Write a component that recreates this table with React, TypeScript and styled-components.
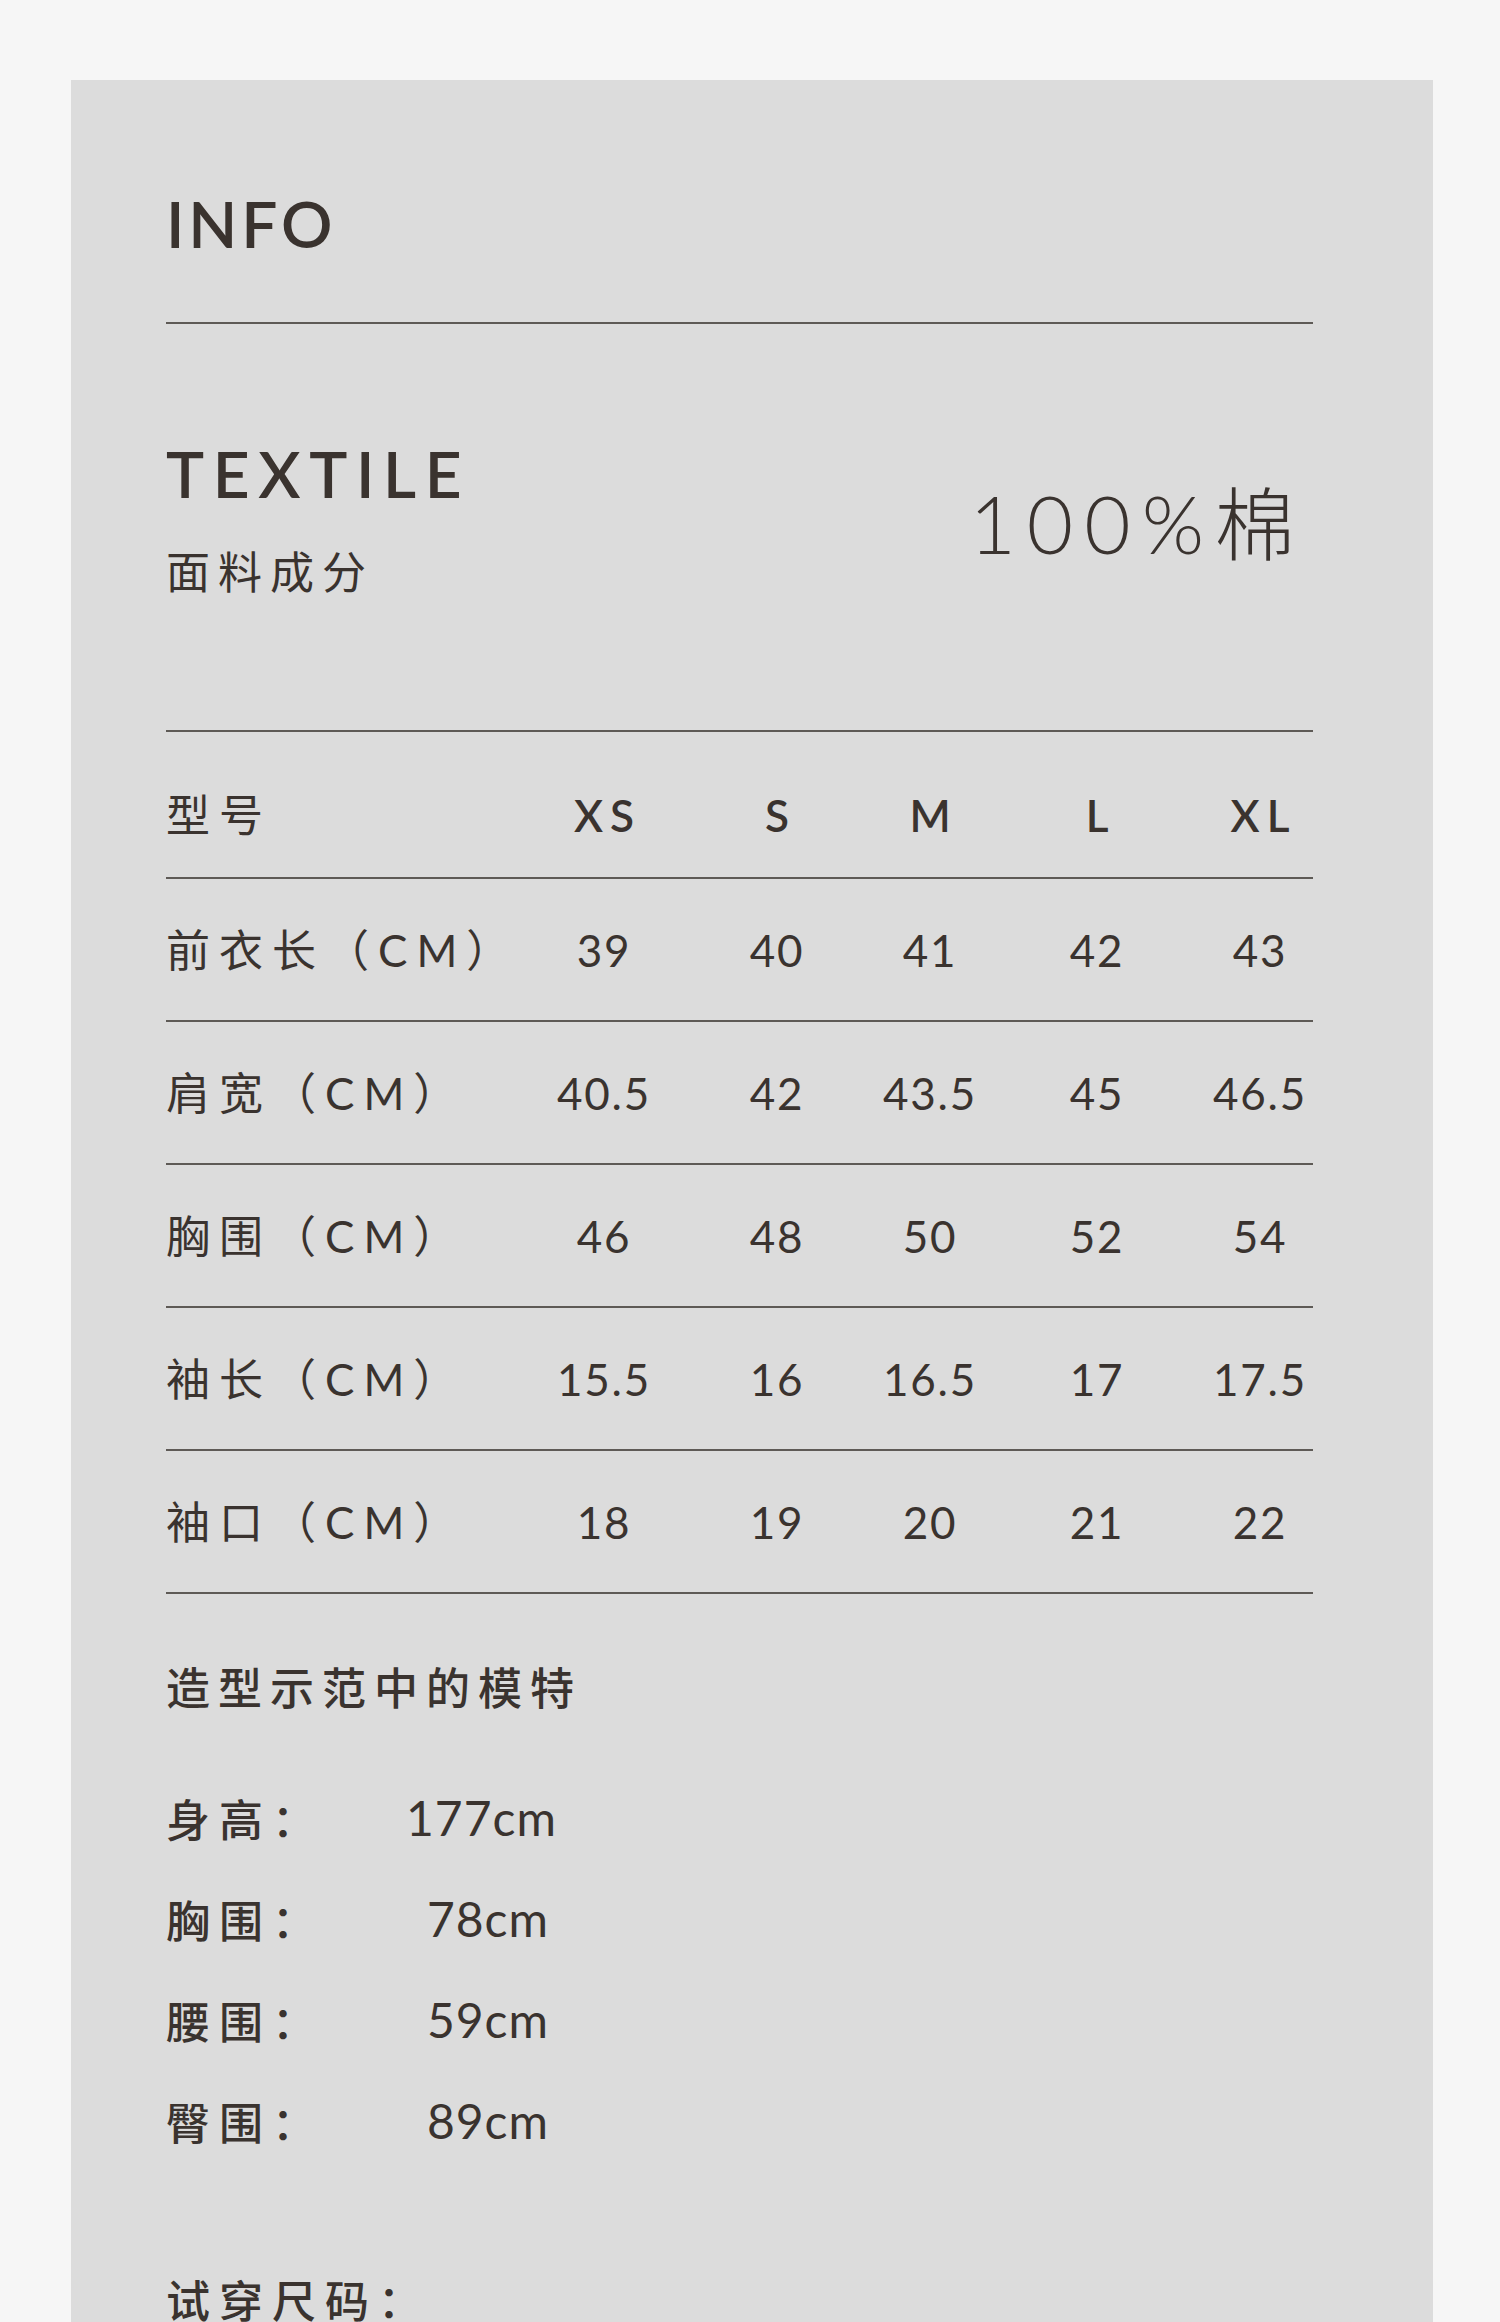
import styled, { createGlobalStyle } from "styled-components";

const sizes = ["XS", "S", "M", "L", "XL"];

const measures = [
  { name: "前衣长（CM）", values: ["39", "40", "41", "42", "43"] },
  { name: "肩宽（CM）", values: ["40.5", "42", "43.5", "45", "46.5"] },
  { name: "胸围（CM）", values: ["46", "48", "50", "52", "54"] },
  { name: "袖长（CM）", values: ["15.5", "16", "16.5", "17", "17.5"] },
  { name: "袖口（CM）", values: ["18", "19", "20", "21", "22"] },
];

const model = [
  { label: "身高：", value: "177cm" },
  { label: "胸围：", value: "78cm" },
  { label: "腰围：", value: "59cm" },
  { label: "臀围：", value: "89cm" },
];

const App = () => {
  return (
    <>
      <GlobalStyle />
      <StyledPage>
        <StyledCard>
          <StyledHeading>INFO</StyledHeading>
          <StyledDivider />

          <StyledTextile>
            <div>
              <StyledHeading $wide>TEXTILE</StyledHeading>
              <StyledSubtitle>面料成分</StyledSubtitle>
            </div>
            <StyledFabric>100%棉</StyledFabric>
          </StyledTextile>

          <StyledTable>
            <StyledRow $head>
              <StyledLabel>型号</StyledLabel>
              {sizes.map((s) => (
                <StyledSize key={s}>{s}</StyledSize>
              ))}
            </StyledRow>
            {measures.map((m) => (
              <StyledRow key={m.name}>
                <StyledLabel>{m.name}</StyledLabel>
                {m.values.map((v, i) => (
                  <StyledValue key={i}>{v}</StyledValue>
                ))}
              </StyledRow>
            ))}
          </StyledTable>

          <StyledModelTitle>造型示范中的模特</StyledModelTitle>
          <StyledModelList>
            {model.map((m) => (
              <StyledModelRow key={m.label}>
                <StyledModelLabel>{m.label}</StyledModelLabel>
                <StyledModelValue>{m.value}</StyledModelValue>
              </StyledModelRow>
            ))}
          </StyledModelList>
          <StyledFitTitle>试穿尺码：</StyledFitTitle>
        </StyledCard>
      </StyledPage>
    </>
  );
};

const GlobalStyle = createGlobalStyle`
  body {
    margin: 0;
    background: #f6f6f6;
    color: #3a332f;
    font-family: Lato, "Noto Sans CJK SC", sans-serif;
  }
`;

const StyledPage = styled.div`
  padding: 80px 67px 0 71px;
`;

const StyledCard = styled.section`
  background: #dcdcdc;
  padding: 112px 120px 160px 95px;
`;

const StyledHeading = styled.h2<{ $wide?: boolean }>`
  margin: 0;
  font-size: 64px;
  line-height: 64px;
  font-weight: 600;
  letter-spacing: ${(p) => (p.$wide ? "0.135em" : "0.06em")};
`;

const StyledDivider = styled.hr`
  margin: 66px 0 0;
  border: none;
  height: 2px;
  background: #5e5a56;
`;

const StyledTextile = styled.div`
  display: flex;
  justify-content: space-between;
  align-items: center;
  padding: 118px 0 137px;
  border-bottom: 2px solid #5e5a56;
`;

const StyledSubtitle = styled.p`
  margin: 41px 0 0;
  font-family: "Noto Sans CJK SC", sans-serif;
  font-size: 44px;
  line-height: 46px;
  font-weight: 400;
  letter-spacing: 8px;
`;

const StyledFabric = styled.div`
  padding: 10px 7px 0 0;
  font-size: 80px;
  line-height: 80px;
  font-weight: 300;
  letter-spacing: 11px;
`;

const StyledTable = styled.div``;

const StyledRow = styled.div<{ $head?: boolean }>`
  display: grid;
  grid-template-columns: 361px 154px 192px 114px 220px 106px;
  align-items: center;
  box-sizing: border-box;
  height: ${(p) => (p.$head ? "147px" : "143px")};
  padding-top: ${(p) => (p.$head ? "21px" : "0")};
  border-bottom: 2px solid #5e5a56;
`;

const StyledLabel = styled.div`
  font-size: 44px;
  line-height: 46px;
  letter-spacing: 9px;
  white-space: nowrap;
`;

const StyledSize = styled.div`
  text-align: center;
  padding-left: 0.16em;
  font-size: 44px;
  line-height: 46px;
  font-weight: 600;
  letter-spacing: 0.16em;
`;

const StyledValue = styled.div`
  text-align: center;
  white-space: nowrap;
  font-size: 44px;
  line-height: 46px;
  letter-spacing: 0.04em;
`;

const StyledModelTitle = styled.h3`
  margin: 69px 0 0;
  font-family: "Noto Sans CJK SC", sans-serif;
  font-size: 44px;
  line-height: 46px;
  font-weight: 500;
  letter-spacing: 8px;
`;

const StyledModelList = styled.div`
  margin-top: 58px;
`;

const StyledModelRow = styled.div`
  display: grid;
  grid-template-columns: 240px 143px;
  align-items: center;
  height: 101px;
`;

const StyledModelLabel = styled.span`
  font-family: "Noto Sans CJK SC", sans-serif;
  font-size: 44px;
  line-height: 46px;
  font-weight: 500;
  letter-spacing: 9px;
`;

const StyledModelValue = styled.span`
  text-align: right;
  font-size: 48px;
  line-height: 48px;
  letter-spacing: 1px;
`;

const StyledFitTitle = styled.h3`
  margin: 105px 0 0;
  font-family: "Noto Sans CJK SC", sans-serif;
  font-size: 44px;
  line-height: 46px;
  font-weight: 500;
  letter-spacing: 9px;
`;

export default App;
